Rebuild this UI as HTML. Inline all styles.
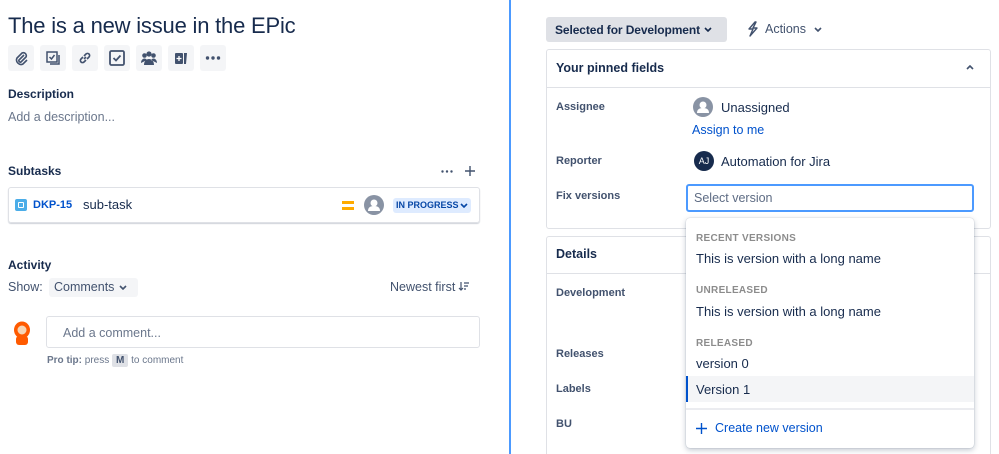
<!DOCTYPE html>
<html><head><meta charset="utf-8"><style>
*{box-sizing:border-box;margin:0;padding:0}
html,body{width:999px;height:454px;overflow:hidden}
body{background:#fff;font-family:"Liberation Sans",sans-serif;color:#172b4d;position:relative}
.a{position:absolute;white-space:nowrap}
.ib{position:absolute;top:45px;width:26px;height:26px;background:#f4f5f7;border-radius:3px;display:flex;align-items:center;justify-content:center}
.lbl{font-size:12px;font-weight:bold;color:#42526e}
.h{font-size:13px;font-weight:bold;color:#172b4d}
.sec{font-size:10px;font-weight:bold;color:#8c8c8c;letter-spacing:.3px}
.it{font-size:13px;color:#172b4d}
</style></head><body>
<div class="a" style="left:8px;top:13px;font-size:22px;color:#172b4d;letter-spacing:-0.2px">The is a new issue in the EPic</div>
<div class="ib" style="left:8px"><svg width="16" height="16" viewBox="0 0 16 16"><path d="M11 5 6 10a1.5 1.5 0 0 0 2 2l5-5a3 3 0 0 0-4-4L4 8a4.5 4.5 0 0 0 6 6l4-4" fill="none" stroke="#42526e" stroke-width="1.6"/></svg></div>
<div class="ib" style="left:40px"><svg width="16" height="16" viewBox="0 0 16 16"><rect x="2" y="2" width="10" height="10" fill="none" stroke="#42526e" stroke-width="1.5"/><path d="M4.5 7l2 2 3-4M14 5v9H5" fill="none" stroke="#42526e" stroke-width="1.5"/></svg></div>
<div class="ib" style="left:72px"><svg width="16" height="16" viewBox="0 0 16 16"><path d="M7 9l2-2M6 7 4 9a2 2 0 0 0 3 3l2-2M10 9l2-2a2 2 0 0 0-3-3L7 6" fill="none" stroke="#42526e" stroke-width="1.6"/></svg></div>
<div class="ib" style="left:104px"><svg width="18" height="18" viewBox="0 0 18 18"><rect x="2" y="2" width="14" height="14" rx="1.5" fill="none" stroke="#42526e" stroke-width="1.8"/><path d="M5.5 9l2.5 2.5 4.5-5" fill="none" stroke="#42526e" stroke-width="1.8"/></svg></div>
<div class="ib" style="left:136px"><svg width="18" height="16" viewBox="0 0 18 16"><circle cx="4.5" cy="5.5" r="2.3" fill="#42526e"/><circle cx="13.5" cy="5.5" r="2.3" fill="#42526e"/><circle cx="9" cy="4" r="2.6" fill="#42526e"/><path d="M1 13c0-3 2-4.5 3.5-4.5S7 10 7 10zM17 13c0-3-2-4.5-3.5-4.5S11 10 11 10zM4 15c0-4 2.5-6 5-6s5 2 5 6z" fill="#42526e"/></svg></div>
<div class="ib" style="left:168px"><svg width="16" height="16" viewBox="0 0 16 16"><rect x="2" y="3" width="8" height="11" rx="1" fill="#42526e"/><path d="M11 3h3l-1 11h-2z" fill="#42526e"/><path d="M6 6v5M3.5 8.5h5" stroke="#fff" stroke-width="1.3"/></svg></div>
<div class="ib" style="left:200px"><svg width="16" height="4" viewBox="0 0 16 4"><circle cx="2.5" cy="2" r="1.7" fill="#42526e"/><circle cx="8" cy="2" r="1.7" fill="#42526e"/><circle cx="13.5" cy="2" r="1.7" fill="#42526e"/></svg></div>
<div class="a h" style="left:8px;top:87px;font-size:12px">Description</div>
<div class="a" style="left:8px;top:110px;font-size:12.5px;color:#6b778c">Add a description...</div>
<div class="a h" style="left:8px;top:164px;font-size:12px">Subtasks</div>
<svg class="a" style="left:441px;top:170px" width="12" height="3" viewBox="0 0 12 3"><circle cx="1.5" cy="1.5" r="1.2" fill="#42526e"/><circle cx="6" cy="1.5" r="1.2" fill="#42526e"/><circle cx="10.5" cy="1.5" r="1.2" fill="#42526e"/></svg>
<svg class="a" style="left:464px;top:165px" width="12" height="12" viewBox="0 0 12 12"><path d="M6 1v10M1 6h10" stroke="#42526e" stroke-width="1.4"/></svg>
<div class="a" style="left:8px;top:187px;width:472px;height:36px;border:1px solid #dfe1e6;border-radius:3px;box-shadow:0 1px 1px rgba(9,30,66,.2)"></div>
<div class="a" style="left:15px;top:199px;width:12px;height:12px;background:#4bade8;border-radius:2px"><div style="margin:3px;width:6px;height:6px;border:1.5px solid #fff;border-radius:1px"></div></div>
<div class="a" style="left:33px;top:199px;font-size:11px;font-weight:bold;color:#0052cc">DKP-15</div>
<div class="a" style="left:83px;top:197px;font-size:13px">sub-task</div>
<div class="a" style="left:342px;top:201px;width:12px;height:2.5px;background:#ffab00"></div>
<div class="a" style="left:342px;top:207px;width:12px;height:2.5px;background:#ffab00"></div>
<svg class="a" style="left:364px;top:195px" width="20" height="20" viewBox="0 0 20 20"><circle cx="10" cy="10" r="10" fill="#8993a4"/><circle cx="10" cy="8" r="3.5" fill="#fff"/><path d="M4 16c0-4 3-5 6-5s6 1 6 5z" fill="#fff"/></svg>
<div class="a" style="left:393px;top:198px;width:78px;height:15px;background:#deebff;border-radius:3px;font-size:9px;font-weight:bold;color:#0747a6;padding:2px 0 0 3px">IN PROGRESS</div>
<svg class="a" style="left:460px;top:203px" width="8" height="5" viewBox="0 0 8 5"><path d="M1 1l3 3 3-3" fill="none" stroke="#0747a6" stroke-width="1.6"/></svg>
<div class="a h" style="left:8px;top:258px;font-size:12px">Activity</div>
<div class="a" style="left:8px;top:280px;font-size:12.5px;color:#42526e">Show:</div>
<div class="a" style="left:49px;top:278px;width:89px;height:19px;background:#f4f5f7;border-radius:3px;font-size:12.5px;color:#42526e;padding:2px 0 0 5px">Comments</div>
<svg class="a" style="left:119px;top:285px" width="8" height="5" viewBox="0 0 8 5"><path d="M1 1l3 3 3-3" fill="none" stroke="#42526e" stroke-width="1.6"/></svg>
<div class="a" style="left:390px;top:280px;font-size:12.5px;color:#42526e">Newest first</div>
<svg class="a" style="left:458px;top:281px" width="12" height="11" viewBox="0 0 12 11"><path d="M3 1v8M1 7l2 2 2-2M6 2h5M6 5h4M6 8h2" fill="none" stroke="#42526e" stroke-width="1.2"/></svg>
<svg class="a" style="left:13px;top:321px" width="18" height="25" viewBox="0 0 18 25"><ellipse cx="9" cy="9" rx="8" ry="8.5" fill="#ff5a00"/><circle cx="9" cy="9" r="4.5" fill="#f6d5b5"/><rect x="3" y="15" width="12" height="9" rx="3" fill="#ff5a00"/></svg>
<div class="a" style="left:46px;top:316px;width:434px;height:32px;border:1px solid #dfe1e6;border-radius:3px;font-size:12.5px;color:#6b778c;padding:9px 0 0 16px">Add a comment...</div>
<div class="a" style="left:47px;top:355px;font-size:10px;color:#6b778c"><b>Pro tip:</b> press <span style="background:#dfe1e6;padding:1px 4px;border-radius:2px;font-weight:bold;color:#42526e">M</span> to comment</div>
<div class="a" style="left:509px;top:0;width:2px;height:454px;background:#4c9aff"></div>
<div class="a" style="left:546px;top:17px;width:181px;height:25px;background:#dfe1e6;border-radius:3px;font-size:12px;font-weight:bold;color:#172b4d;padding:6px 0 0 9px;letter-spacing:-0.1px">Selected for Development</div>
<svg class="a" style="left:704px;top:27px" width="8" height="5" viewBox="0 0 8 5"><path d="M1 1l3 3 3-3" fill="none" stroke="#172b4d" stroke-width="1.6"/></svg>
<svg class="a" style="left:746px;top:21px" width="14" height="16" viewBox="0 0 14 16"><path d="M9 1 3 8h4l-3 7 7-8H7l3-6z" fill="none" stroke="#42526e" stroke-width="1.4" stroke-linejoin="round"/></svg>
<div class="a" style="left:765px;top:22px;font-size:12.5px;color:#42526e">Actions</div>
<svg class="a" style="left:814px;top:27px" width="8" height="5" viewBox="0 0 8 5"><path d="M1 1l3 3 3-3" fill="none" stroke="#42526e" stroke-width="1.6"/></svg>
<div class="a" style="left:546px;top:49px;width:445px;height:180px;border:1px solid #dfe1e6;border-radius:3px"></div>
<div class="a" style="left:546px;top:87px;width:445px;height:1px;background:#dfe1e6"></div>
<div class="a h" style="left:556px;top:61px;font-size:12.5px">Your pinned fields</div>
<svg class="a" style="left:966px;top:65px" width="8" height="5" viewBox="0 0 8 5"><path d="M1 4l3-3 3 3" fill="none" stroke="#42526e" stroke-width="1.6"/></svg>
<div class="a lbl" style="left:556px;top:101px;font-size:11px">Assignee</div>
<svg class="a" style="left:693px;top:97px" width="20" height="20" viewBox="0 0 20 20"><circle cx="10" cy="10" r="10" fill="#8993a4"/><circle cx="10" cy="8" r="3.5" fill="#fff"/><path d="M4 16c0-4 3-5 6-5s6 1 6 5z" fill="#fff"/></svg>
<div class="a it" style="left:721px;top:100px">Unassigned</div>
<div class="a" style="left:692px;top:123px;font-size:12.5px;color:#0052cc">Assign to me</div>
<div class="a lbl" style="left:556px;top:155px;font-size:11px">Reporter</div>
<div class="a" style="left:694px;top:151px;width:20px;height:20px;border-radius:50%;background:#172b4d;color:#fff;font-size:9px;text-align:center;line-height:20px">AJ</div>
<div class="a it" style="left:721px;top:154px">Automation for Jira</div>
<div class="a lbl" style="left:556px;top:190px;font-size:11px">Fix versions</div>
<div class="a" style="left:686px;top:184px;width:288px;height:28px;border:2px solid #4c9aff;border-radius:3px;font-size:12.5px;color:#5e6c84;padding:5px 0 0 6px">Select version</div>
<div class="a" style="left:546px;top:236px;width:445px;height:230px;border:1px solid #dfe1e6;border-radius:3px"></div>
<div class="a" style="left:546px;top:273px;width:445px;height:1px;background:#dfe1e6"></div>
<div class="a h" style="left:556px;top:247px;font-size:12.5px">Details</div>
<div class="a lbl" style="left:556px;top:287px;font-size:11px">Development</div>
<div class="a lbl" style="left:556px;top:348px;font-size:11px">Releases</div>
<div class="a lbl" style="left:556px;top:383px;font-size:11px">Labels</div>
<div class="a lbl" style="left:556px;top:418px;font-size:11px">BU</div>
<div class="a" style="left:686px;top:218px;width:288px;height:230px;background:#fff;border-radius:4px;box-shadow:0 2px 6px rgba(9,30,66,.25),0 0 1px rgba(9,30,66,.31)"></div>
<div class="a sec" style="left:696px;top:233px">RECENT VERSIONS</div>
<div class="a it" style="left:696px;top:251px">This is version with a long name</div>
<div class="a sec" style="left:696px;top:285px">UNRELEASED</div>
<div class="a it" style="left:696px;top:304px">This is version with a long name</div>
<div class="a sec" style="left:696px;top:338px">RELEASED</div>
<div class="a it" style="left:696px;top:356px">version 0</div>
<div class="a" style="left:686px;top:376px;width:288px;height:26px;background:#f4f5f7;border-left:2px solid #0052cc"></div>
<div class="a it" style="left:696px;top:382px">Version 1</div>
<div class="a" style="left:686px;top:408px;width:288px;height:2px;background:#ebecf0"></div>
<svg class="a" style="left:696px;top:423px" width="11" height="11" viewBox="0 0 11 11"><path d="M5.5 0v11M0 5.5h11" stroke="#0052cc" stroke-width="1.4"/></svg>
<div class="a" style="left:715px;top:421px;font-size:12.5px;color:#0052cc">Create new version</div>
</body></html>
